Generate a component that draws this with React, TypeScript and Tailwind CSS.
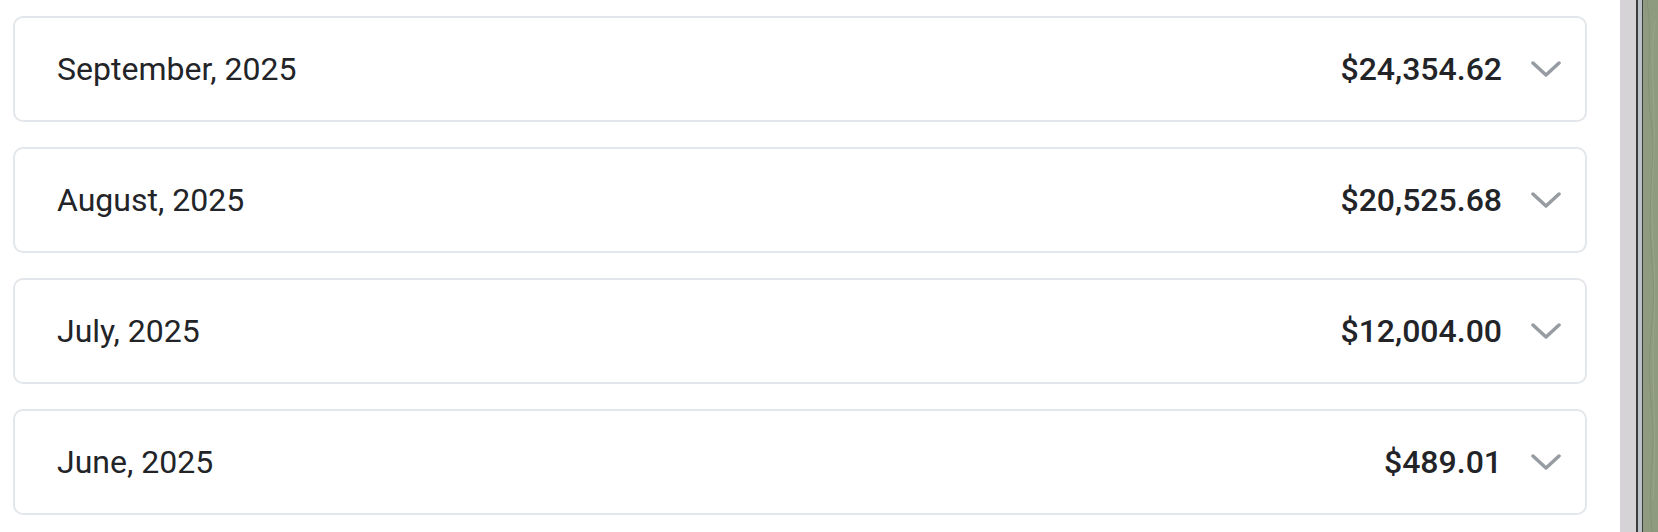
import React from "react";

const rows = [
  { label: "September, 2025", amount: "$24,354.62" },
  { label: "August, 2025", amount: "$20,525.68" },
  { label: "July, 2025", amount: "$12,004.00" },
  { label: "June, 2025", amount: "$489.01" },
];

function Chevron() {
  return (
    <svg width="30" height="16" viewBox="0 0 30 16" fill="none" className="shrink-0">
      <path d="M2 2 L15 14 L28 2" stroke="#979ca2" strokeWidth="3.5" strokeLinecap="round" strokeLinejoin="round" />
    </svg>
  );
}

export default function App() {
  return (
    <div className="flex h-[532px] w-[1658px] overflow-hidden bg-white" style={{ fontFamily: "Roboto, 'Noto Sans', sans-serif" }}>
      <div className="flex w-[1620px] shrink-0 flex-col gap-[25px] pl-[13px] pr-[33px] pt-[16px]">
        {rows.map((r) => (
          <div
            key={r.label}
            className="flex h-[106px] shrink-0 items-center rounded-[10px] border-2 border-[#e3e6ea] bg-white pl-[42px] pr-[24px]"
          >
            <span className="flex-1 text-[32px] leading-none text-[#222428]">{r.label}</span>
            <span className="text-[32px] font-medium leading-none text-[#222428]">{r.amount}</span>
            <div className="ml-[29px]">
              <Chevron />
            </div>
          </div>
        ))}
      </div>
      <div className="w-[16px] shrink-0 bg-[#d5d3d5]" />
      <div className="w-[2px] shrink-0 bg-[#3c3c3e]" />
      <div className="w-[4px] shrink-0 bg-[#b9c2c6]" />
      <div className="w-[1px] shrink-0 bg-[#3c3c3e]" />
      <div className="relative flex-1 bg-[#8e9b7e]">
        <svg className="absolute inset-0 h-full w-full" viewBox="0 0 15 532" preserveAspectRatio="none">
          <path d="M4 0 C10 40 2 80 8 120 S3 200 9 260 S2 340 8 400 S4 470 9 532" stroke="#7f8c70" strokeWidth="1" fill="none" opacity="0.6" />
          <path d="M12 20 C6 60 14 110 10 170 S14 260 11 320 S14 420 10 500" stroke="#a3ae93" strokeWidth="1" fill="none" opacity="0.5" />
        </svg>
      </div>
    </div>
  );
}
